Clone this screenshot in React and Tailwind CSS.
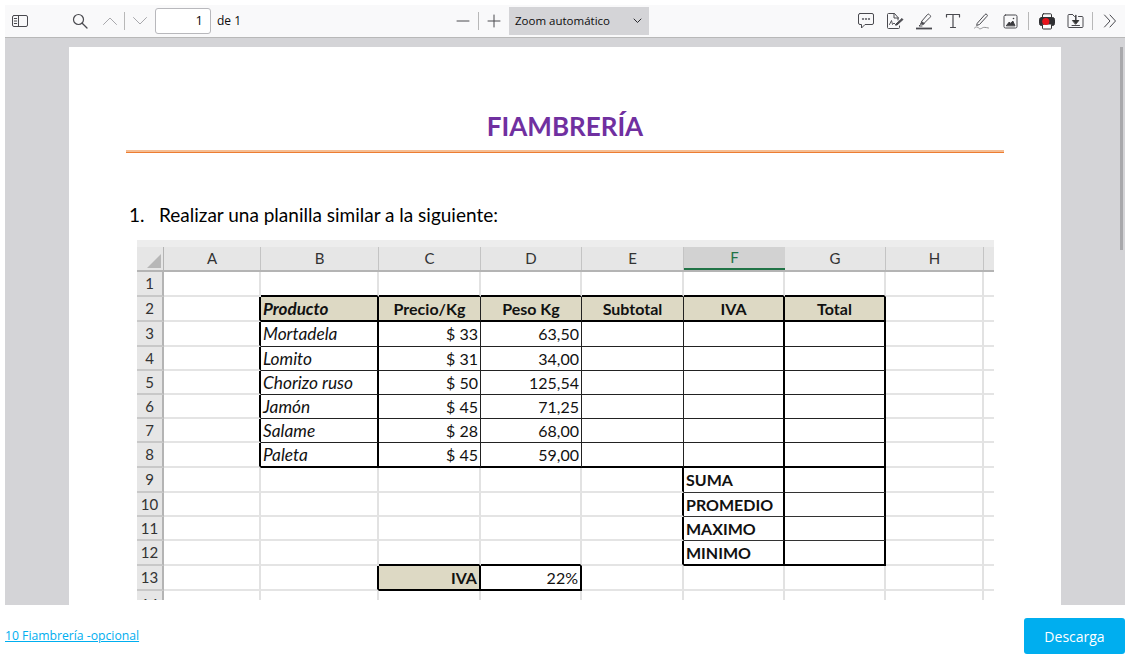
import React from "react";

const Ic = ({ w = 18, h = 18, children }) => (
  <svg width={w} height={h} viewBox={`0 0 ${w} ${h}`} fill="none" stroke="#4a4a4f" strokeWidth="1" strokeLinecap="round" strokeLinejoin="round">
    {children}
  </svg>
);

const Btn = ({ className = "w-[29px]", children }) => (
  <div className={`flex h-full shrink-0 items-center justify-center ${className}`}>{children}</div>
);
const Sep = () => <div className="h-[18px] w-px shrink-0 bg-[#b8b8b8]" />;

const Toolbar = () => (
  <div className="flex h-[33px] shrink-0 items-center border-b border-b-[#b8b8b8] bg-[#f9f9fa] text-[#0c0c0d] [font-family:'Open_Sans',sans-serif]">
    <Btn className="w-[30px]">
      <Ic w={16} h={14}>
        <rect x="0.5" y="1.5" width="15" height="11" rx="1.5" />
        <path d="M6.5 1.5v11M2.3 4.5h2.4M2.3 7h2.4M2.3 9.5h2.4" />
      </Ic>
    </Btn>
    <Btn className="ml-[30px] w-[30px]">
      <Ic>
        <circle cx="7.5" cy="7.5" r="5" strokeWidth="1.2" />
        <path d="M11.2 11.2l4.8 4.8" strokeWidth="1.3" />
      </Ic>
    </Btn>
    <Btn className="w-[29px]">
      <Ic w={16} h={10}><path d="M1.5 8.5L8 2l6.5 6.5" stroke="#a8a8ac" /></Ic>
    </Btn>
    <Sep />
    <Btn className="w-[30px]">
      <Ic w={16} h={10}><path d="M1.5 1.5L8 8l6.500-6.500" stroke="#a8a8ac" /></Ic>
    </Btn>
    <div className="flex h-[26px] w-[56px] shrink-0 items-center justify-end rounded-[3px] border border-[#b8b8bc] bg-white pr-[7px] text-[13px]">1</div>
    <div className="ml-[6px] w-[231px] shrink-0 text-[12px]">de 1</div>
    <Btn className="w-[30px]">
      <Ic w={14} h={4}><path d="M1 2h12" /></Ic>
    </Btn>
    <Sep />
    <Btn className="w-[29px]">
      <Ic w={14} h={14}><path d="M1 7h12M7 1v12" /></Ic>
    </Btn>
    <div className="ml-px flex h-[28px] w-[140px] shrink-0 items-center justify-between bg-[#d4d4d7] pl-[6px] pr-[7px] text-[11.5px]">
      <span>Zoom automático</span>
      <Ic w={9} h={6}><path d="M1 1l3.5 3.5L8 1" stroke="#2a2a2e" /></Ic>
    </div>
    <div className="flex min-w-0 flex-1 items-center justify-end self-stretch">
      <Btn>
        <Ic>
          <path d="M3 1.500h12a1.500 1.500 0 0 1 1.500 1.500v8a1.500 1.500 0 0 1-1.500 1.500H8l-3.500 3.500V12.500H3A1.500 1.500 0 0 1 1.500 11V3A1.500 1.500 0 0 1 3 1.500z" />
          <path d="M5.500 7h1M8.500 7h1M11.500 7h1" strokeWidth="1.3" />
        </Ic>
      </Btn>
      <Btn>
        <Ic>
          <path d="M12 8V5.500L8.500 1.500H2.500a1 1 0 0 0-1 1v13a1 1 0 0 0 1 1h10a1 1 0 0 0 1-1v-1.500" />
          <path d="M8 1.500v4.500h4.500" />
          <path d="M3.500 12.500L5.500 8.500l1 4 1.500-1.500 1 1" strokeWidth="0.9" />
          <path d="M10 12l6-5.500 1 1-6 5.500h-1.500z" fill="#4a4a4f" />
        </Ic>
      </Btn>
      <Btn>
        <Ic w={16} h={18}>
          <path d="M5.500 9.500l6-7a1.200 1.200 0 0 1 1.700 0l1 1a1.200 1.200 0 0 1 0 1.700l-6.500 6.500z" />
          <path d="M6.500 10l1.800 1.800-2 .8-1.500-1z" fill="#4a4a4f" />
          <path d="M4.500 12.500l-1.500 1.500h3" />
          <path d="M0 16.500h16" strokeWidth="1.800" strokeLinecap="butt" />
        </Ic>
      </Btn>
      <Btn>
        <Ic w={16} h={16}>
          <path d="M1.500 4V1.500h13V4M8 1.500v13M5.500 14.500h5" strokeWidth="1.200" />
        </Ic>
      </Btn>
      <Btn>
        <Ic w={15} h={18}>
          <path d="M3.500 11L11 2.500a1.300 1.300 0 0 1 1.900 0 1.300 1.300 0 0 1 0 1.900L5.500 12.500l-2.500.8z" />
          <path d="M0.500 16c1.500-1.500 3-1.500 4 0s3 .5 4-.2 3-.5 6 .2" strokeWidth="0.8" stroke="#77777a" />
        </Ic>
      </Btn>
      <Btn>
        <Ic w={15} h={15}>
          <rect x="1" y="1" width="13" height="13" rx="1.500" />
          <path d="M3.500 11.500l2.800-3.500 1.500 1.500 2-2.500 2 4.500z" fill="#3a3a3e" stroke="#3a3a3e" />
          <circle cx="10.500" cy="4.500" r="0.800" fill="#3a3a3e" stroke="none" />
        </Ic>
      </Btn>
      <div className="w-[3px] shrink-0" />
      <Sep />
      <div className="w-[3px] shrink-0" />
      <Btn>
        <Ic w={16} h={17}>
          <rect x="3.500" y="0.800" width="9" height="5" rx="1" stroke="#333" />
          <rect x="0.500" y="4.500" width="15" height="8" rx="2" fill="#303033" stroke="#303033" />
          <rect x="3.500" y="11" width="9" height="5" rx="1" fill="#fff" stroke="#333" />
          <circle cx="6.800" cy="8.500" r="3.600" fill="#e8141c" stroke="none" />
        </Ic>
      </Btn>
      <Btn>
        <Ic w={17} h={16}>
          <path d="M5.500 1.500H2a1 1 0 0 0-1 1v11a1 1 0 0 0 1 1h13a1 1 0 0 0 1-1v-9a1 1 0 0 0-1-1h-3.500" />
          <path d="M5.500 1.500l2 2" />
          <path d="M8.800 2.500v7" strokeWidth="1.600" />
          <path d="M5.800 7.500h6l-3 3.500z" fill="#333" stroke="#333" />
          <path d="M5 12.500h7.500" />
        </Ic>
      </Btn>
      <div className="w-[2px] shrink-0" />
      <Sep />
      <Btn className="w-[32px] pl-[2px]">
        <Ic w={14} h={14}>
          <path d="M1.500 1L7 7l-5.500 6M7 1l5.500 6L7 13" />
        </Ic>
      </Btn>
    </div>
  </div>
);

const COLS = ["A", "B", "C", "D", "E", "F", "G", "H", "_"];
const ROWS = [
  ["1", "h-[25px]"], ["2", "h-[25px]"], ["3", "h-[25px]"], ["4", "h-[24px]"], ["5", "h-[24px]"], ["6", "h-[24px]"], ["7", "h-[24px]"],
  ["8", "h-[25px]"], ["9", "h-[25px]"], ["10", "h-[24px]"], ["11", "h-[24px]"], ["12", "h-[25px]"], ["13", "h-[25px]"], ["14", "h-[9px]"],
];
const widths = { A: "w-[97px]", B: "w-[118px]", C: "w-[102px]", D: "w-[101px]", E: "w-[102px]", F: "w-[101px]", G: "w-[101px]", H: "w-[98px]", _: "w-[10px]" };

const TEXT = {
  "2B": "Producto", "2C": "Precio/Kg", "2D": "Peso Kg", "2E": "Subtotal", "2F": "IVA", "2G": "Total",
  "3B": "Mortadela", "4B": "Lomito", "5B": "Chorizo ruso", "6B": "Jamón", "7B": "Salame", "8B": "Paleta",
  "3C": "$ 33", "4C": "$ 31", "5C": "$ 50", "6C": "$ 45", "7C": "$ 28", "8C": "$ 45",
  "3D": "63,50", "4D": "34,00", "5D": "125,54", "6D": "71,25", "7D": "68,00", "8D": "59,00",
  "9F": "SUMA", "10F": "PROMEDIO", "11F": "MAXIMO", "12F": "MINIMO", "13C": "IVA", "13D": "22%",
};

const rightBorder = (r, c) => {
  if (c === "_") return "";
  if (r >= 2 && r <= 8) {
    if (c === "A" || c === "B" || c === "F" || c === "G") return "border-r-2 border-r-black";
    if (c === "C" || c === "D" || c === "E") return "border-r border-r-[#222]";
  }
  if (r >= 9 && r <= 12) {
    if (c === "E" || c === "F" || c === "G") return "border-r-2 border-r-black";
  }
  if (r === 13 && (c === "B" || c === "C" || c === "D")) return "border-r-2 border-r-black";
  return "border-r-2 border-r-[#e2e2e2]";
};

const inProducts = (c) => "BCDEFG".includes(c);
const bottomBorder = (r, c) => {
  if (r === 14) return "";
  if ((r === 1 || r === 2 || r === 8) && inProducts(c)) return "border-b-2 border-b-black";
  if (r >= 3 && r <= 7 && inProducts(c)) return "border-b border-b-[#222]";
  if (r >= 9 && r <= 11 && (c === "F" || c === "G")) return "border-b border-b-[#333]";
  if (r === 12 && (c === "F" || c === "G" || c === "C" || c === "D")) return "border-b-2 border-b-black";
  if (r === 13 && (c === "C" || c === "D")) return "border-b-2 border-b-black";
  return "border-b-2 border-b-[#e4e4e4]";
};

const textStyle = (r, c) => {
  if (r === 2 && c === "B") return "justify-start pl-[2px] text-[17px] font-bold italic";
  if (r === 2) return "justify-center font-bold";
  if (c === "B") return "justify-start pl-[2px] text-[17.3px] italic";
  if (r >= 9 && r <= 12 && c === "F") return "justify-start pl-[2px] font-bold";
  if (r === 13 && c === "C") return "justify-end pr-[2px] font-bold";
  if (c === "C" || c === "D") return "justify-end pr-[2px]";
  return "";
};

const fill = (r, c) => {
  if (r === 2 && inProducts(c)) return "bg-[#ddd9c4]";
  if (r === 13 && c === "C") return "bg-[#ddd9c4]";
  return "bg-white";
};

const Sheet = () => (
  <div className="ml-[68px] mt-[13px] w-[857px] text-[16px] text-[#111] [font-family:Lato,sans-serif]">
    <div className="h-[7px] bg-[#ededed]" />
    <div className="flex h-[25px] border-b-2 border-b-[#b4b4b4] bg-[#e6e6e6] text-[15px] text-[#333]">
      <div className="flex w-[27px] shrink-0 items-end justify-end border-r border-r-[#b4b4b4] pb-[2px] pr-[2px]">
        <div className="h-0 w-0 border-b-[14px] border-l-[14px] border-b-[#b7b7b7] border-l-transparent" />
      </div>
      {COLS.map((c) =>
        c === "F" ? (
          <div key={c} className={`flex shrink-0 items-center justify-center border-b-2 border-b-[#217346] bg-[#d2d2d2] text-[#217346] ${widths[c]}`}>F</div>
        ) : (
          <div key={c} className={`flex shrink-0 items-center justify-center ${c === "_" ? "" : "border-r border-r-[#c4c4c4]"} ${widths[c]}`}>
            {c === "_" ? "" : c}
          </div>
        )
      )}
    </div>
    {ROWS.map(([label, hClass]) => {
      const r = Number(label);
      return (
        <div key={label} className={`flex overflow-hidden ${hClass}`}>
          <div className={`flex w-[27px] shrink-0 justify-center border-r-2 border-r-[#b4b4b4] bg-[#e6e6e6] text-[15px] text-[#333] ${r === 14 ? "items-start pt-[2px]" : "items-center border-b-2 border-b-[#c8c8c8]"}`}>
            {label}
          </div>
          {COLS.map((c) => (
            <div key={c} className={`flex shrink-0 items-center whitespace-nowrap ${widths[c]} ${fill(r, c)} ${rightBorder(r, c)} ${bottomBorder(r, c)} ${textStyle(r, c)}`}>
              {TEXT[label + c] || ""}
            </div>
          ))}
        </div>
      );
    })}
  </div>
);

const PdfPage = () => (
  <div className="ml-[64px] h-[560px] w-[992px] shrink-0 overflow-hidden bg-white text-black [font-family:Lato,sans-serif]">
    <h1 className="mt-[59px] text-center text-[26px] font-bold leading-[40px] text-[#7030a0]">FIAMBRERÍA</h1>
    <div className="mx-[57px] mt-[4px] h-[3px] border-t-2 border-t-[#f5bd93] bg-[#ed7d31]" />
    <div className="mt-[50px] flex h-[24px] items-center pl-[60px] text-[19px] leading-[24px]">
      <span className="w-[30px] shrink-0">1.</span>
      <span>Realizar una planilla similar a la siguiente:</span>
    </div>
    <Sheet />
  </div>
);

export default function App() {
  return (
    <div className="h-[659px] overflow-hidden bg-white pl-[5px] pr-[2px] pt-[5px]">
      <div className="flex h-[600px] flex-col overflow-hidden">
        <Toolbar />
        <div className="relative min-h-0 flex-1 overflow-hidden bg-[#d4d4d7] pt-[9px]">
          <PdfPage />
          <div className="absolute right-[2px] top-[9px] h-[203px] w-[3px] bg-[#a9a9ac]" />
        </div>
      </div>
      <div className="mt-[13px] flex h-[36px] items-center justify-between [font-family:'Open_Sans',sans-serif]">
        <a className="pt-px text-[12.2px] text-[#00aeef] underline">10 Fiambrería -opcional</a>
        <div className="flex h-[36px] w-[101px] items-center justify-center rounded-[3px] bg-[#00aeef] text-[14px] text-white">Descarga</div>
      </div>
    </div>
  );
}
